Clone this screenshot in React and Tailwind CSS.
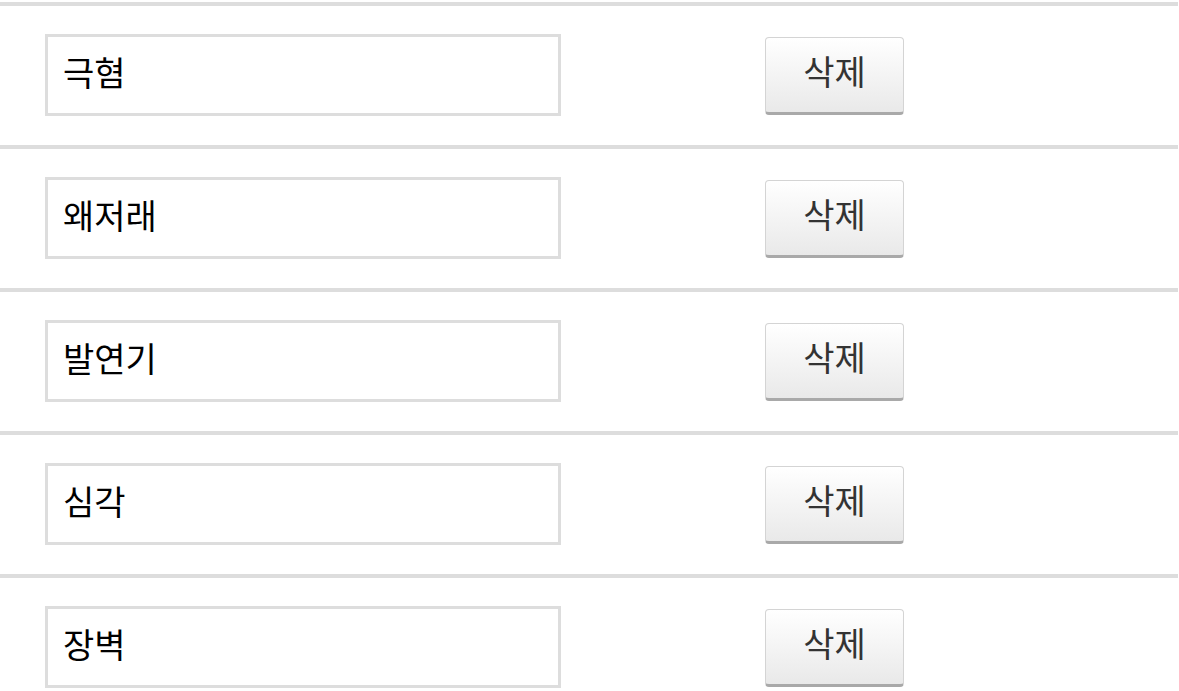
import React from "react";

const words = ["극혐", "왜저래", "발연기", "심각", "장벽"];

const Row = ({ word }) => (
  <div className="w-[1178px] h-[143px] border-t-4 border-[#dddddd] flex items-start">
    <div className="ml-[45px] mt-[28px] w-[516px] h-[82px] border-[3px] border-[#dddddd] bg-white flex items-center pl-[15px] pb-[6px] text-[34px] leading-none text-black">
      {word}
    </div>
    <button className="ml-[204px] mt-[31px] w-[139px] h-[78px] rounded-[4px] border border-[#d4d4d4] border-b-[3px] border-b-[#a9a9a9] bg-gradient-to-b from-white to-[#e9e9e9] text-[34px] leading-none text-[#333333] flex items-center justify-center pb-[8px]">
      삭제
    </button>
  </div>
);

export default function App() {
  return (
    <div
      className="bg-white min-h-[691px] pt-[2px]"
      style={{ fontFamily: '"Noto Sans CJK KR", "Noto Sans", sans-serif' }}
    >
      {words.map((w) => (
        <Row key={w} word={w} />
      ))}
    </div>
  );
}
